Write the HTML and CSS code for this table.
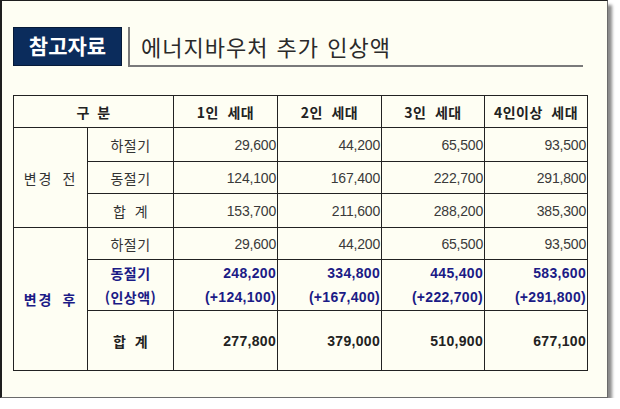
FILE: index.html
```html
<!DOCTYPE html>
<html lang="ko">
<head>
<meta charset="utf-8">
<link rel="stylesheet" href="styles.css">
</head>
<body>
<div class="panel">
  <div class="head">
    <div class="badge">참고자료</div>
    <div class="title">에너지바우처 추가 인상액</div>
  </div>
  <table class="grid">
    <colgroup>
      <col class="c1"><col class="c2"><col class="c3"><col class="c4"><col class="c5"><col class="c6">
    </colgroup>
    <tr class="hdr">
      <th colspan="2" class="wide">구 분</th>
      <th>1인 세대</th>
      <th>2인 세대</th>
      <th>3인 세대</th>
      <th>4인이상 세대</th>
    </tr>
    <tr class="r34">
      <td class="grp" rowspan="3">변경 전</td>
      <td class="lbl">하절기</td>
      <td class="num">29,600</td><td class="num">44,200</td><td class="num">65,500</td><td class="num">93,500</td>
    </tr>
    <tr class="r32">
      <td class="lbl">동절기</td>
      <td class="num">124,100</td><td class="num">167,400</td><td class="num">222,700</td><td class="num">291,800</td>
    </tr>
    <tr class="r34">
      <td class="lbl sp">합 계</td>
      <td class="num">153,700</td><td class="num">211,600</td><td class="num">288,200</td><td class="num">385,300</td>
    </tr>
    <tr class="r32">
      <td class="grp blue" rowspan="3">변경 후</td>
      <td class="lbl">하절기</td>
      <td class="num">29,600</td><td class="num">44,200</td><td class="num">65,500</td><td class="num">93,500</td>
    </tr>
    <tr class="r51 blue">
      <td class="lbl">동절기<br>(인상액)</td>
      <td class="num">248,200<br>(+124,100)</td>
      <td class="num">334,800<br>(+167,400)</td>
      <td class="num">445,400<br>(+222,700)</td>
      <td class="num">583,600<br>(+291,800)</td>
    </tr>
    <tr class="r60 strong">
      <td class="lbl sp">합 계</td>
      <td class="num">277,800</td><td class="num">379,000</td><td class="num">510,900</td><td class="num">677,100</td>
    </tr>
  </table>
</div>
</body>
</html>
```

FILE: styles.css
```css
html, body {
  margin: 0;
  padding: 0;
  background: #ffffff;
}
body {
  font-family: "Noto Sans CJK KR", "Noto Sans", sans-serif;
  color: #333;
}
.panel {
  box-sizing: border-box;
  width: 608px;
  height: 398px;
  background: #fefef3;
  border-left: 2px solid #1e1e1e;
  border-top: 1px solid #1e1e1e;
  border-right: 1px solid #6a6a6a;
  border-bottom: 1px solid #6a6a6a;
  box-shadow: 4px 5px 3px #8a8a8a;
  padding: 26px 0 0 11px;
}
.head {
  display: flex;
  align-items: stretch;
  height: 40px;
}
.badge {
  box-sizing: border-box;
  width: 109px;
  height: 39px;
  background: #0b2c5c;
  border: 1px solid #061a38;
  color: #fff;
  font-weight: 700;
  font-size: 21px;
  line-height: 35px;
  text-align: center;
  letter-spacing: 0;
}
.title {
  box-sizing: border-box;
  margin-left: 6px;
  width: 455px;
  border-left: 2px solid #7a7a7a;
  border-bottom: 2px solid #7a7a7a;
  padding-left: 11px;
  font-size: 22px;
  line-height: 38px;
  letter-spacing: 1px;
  word-spacing: 1px;
  color: #2a2a2a;
}
.grid {
  margin-top: 28px;
  border-collapse: collapse;
  table-layout: fixed;
  width: 575px;
  font-size: 14px;
}
.c1 { width: 74px; }
.c2 { width: 86px; }
.c3 { width: 104px; }
.c4 { width: 104px; }
.c5 { width: 103px; }
.c6 { width: 103px; }
.grid th, .grid td {
  border: 1px solid #222;
  padding: 0;
  vertical-align: middle;
}
.hdr th {
  height: 31px;
  font-weight: 700;
  font-size: 14px;
  color: #222;
  text-align: center;
  letter-spacing: 0.5px;
  word-spacing: 4px;
}
.hdr th.wide {
  word-spacing: 3px;
}
.r34 td { height: 33px; }
.r32 td { height: 31px; }
.r51 td { height: 50px; line-height: 24px; }
.r60 td { height: 59px; }
.grp {
  text-align: center;
  letter-spacing: 2px;
  word-spacing: 3px;
  font-size: 14px;
}
.lbl {
  text-align: center;
  font-size: 14px;
  letter-spacing: 0.5px;
}
.lbl.sp {
  word-spacing: 4px;
}
.num {
  text-align: right;
  padding-right: 1px !important;
  font-family: "Liberation Sans", "Noto Sans CJK KR", sans-serif;
  font-size: 14px;
  letter-spacing: -0.2px;
  color: #3a3a3a;
}
.blue td, td.blue {
  color: #1b1b86;
  font-weight: 700;
}
.blue .num {
  color: #1b1b86;
  letter-spacing: 0.3px;
}
.strong td {
  font-weight: 700;
  color: #222;
}
.strong .num {
  color: #222;
  letter-spacing: 0.3px;
}
```
